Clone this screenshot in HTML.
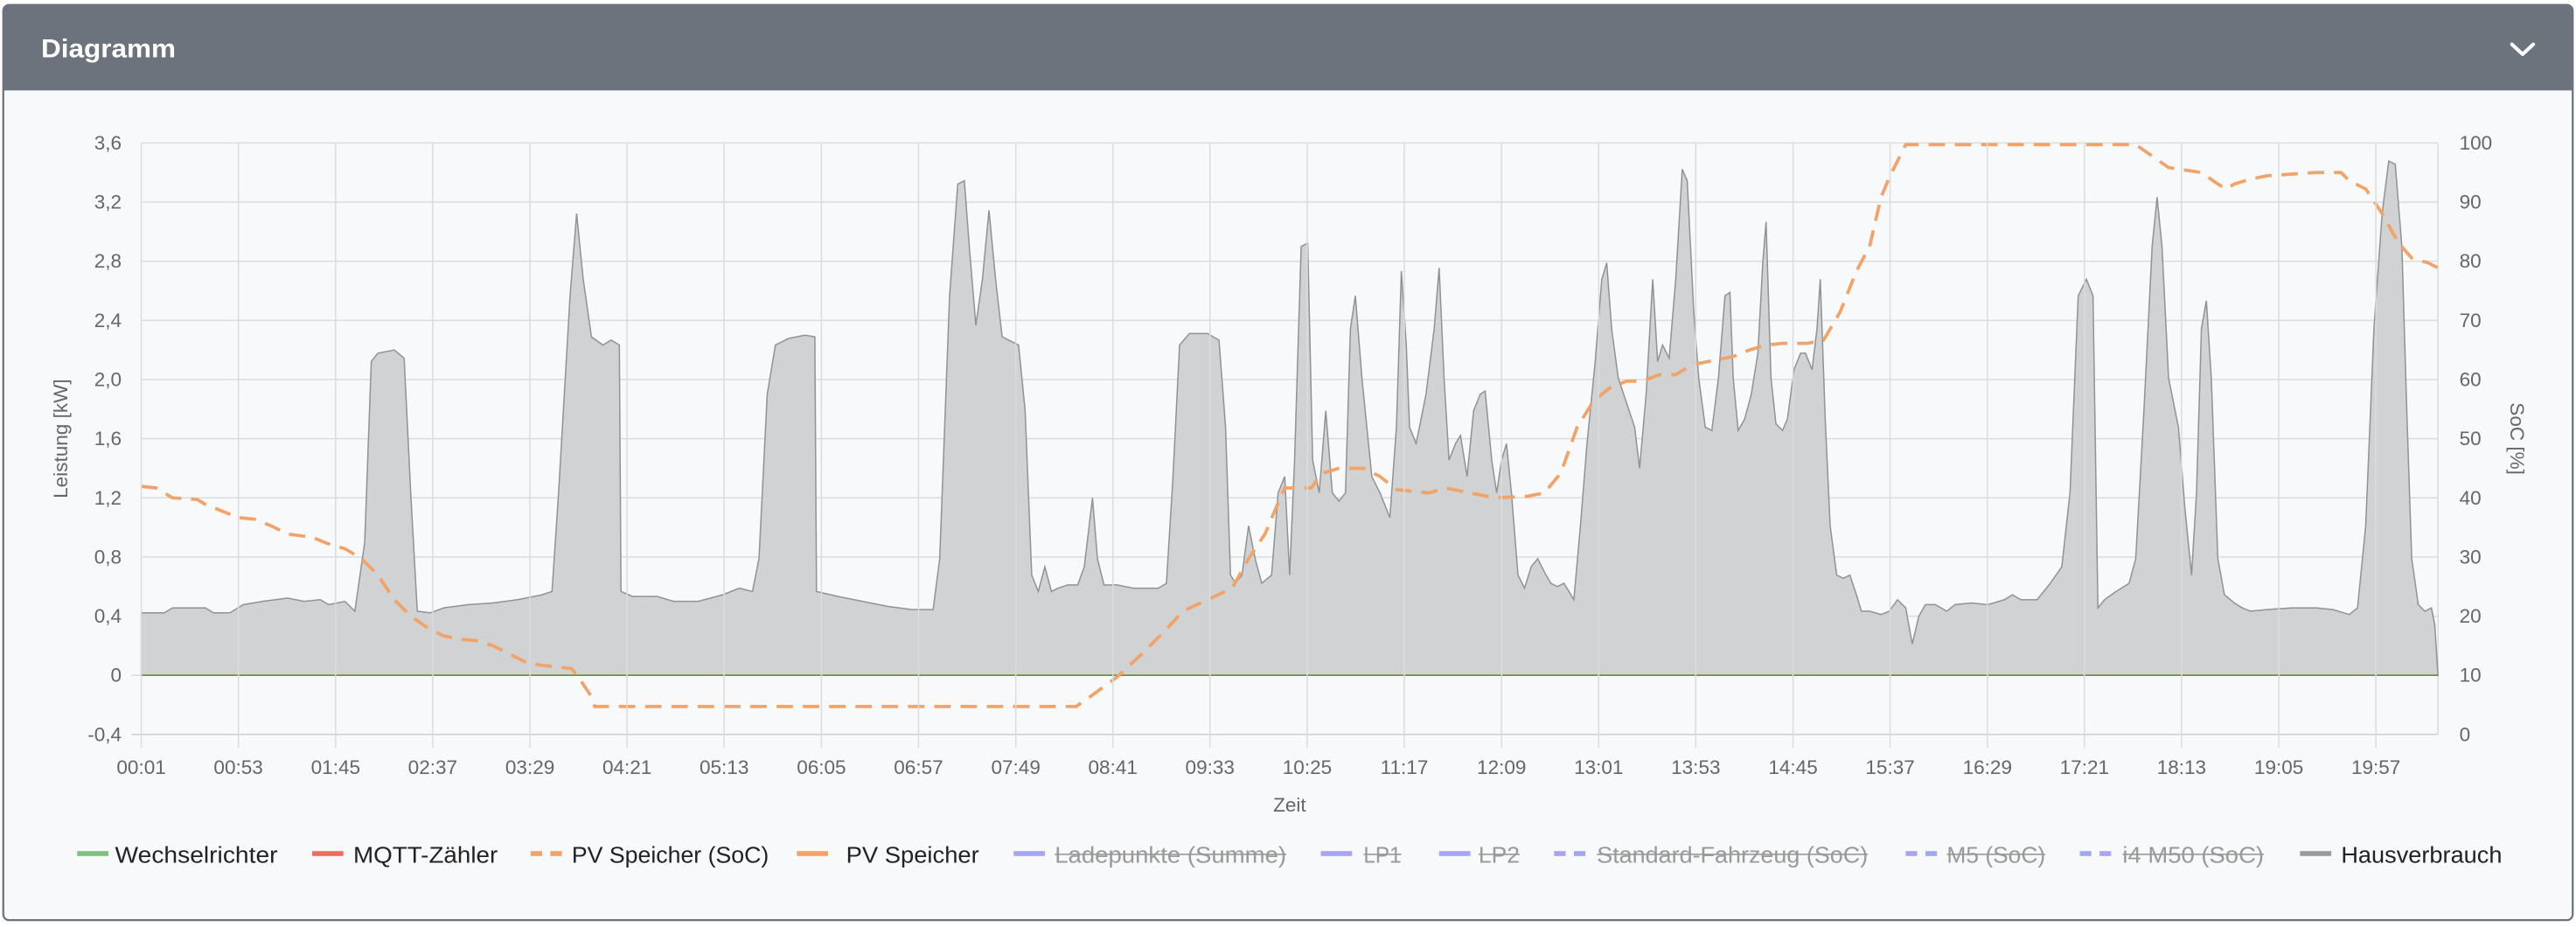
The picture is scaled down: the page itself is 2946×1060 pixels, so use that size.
<!DOCTYPE html>
<html><head><meta charset="utf-8"><style>
html,body{margin:0;padding:0;background:#fff;width:2946px;height:1060px;overflow:hidden}
svg{display:block}
text{font-family:"Liberation Sans",sans-serif}
</style></head><body>
<svg width="2946" height="1060" viewBox="0 0 1568 564.2" preserveAspectRatio="none" xmlns="http://www.w3.org/2000/svg">
<rect x="0" y="0" width="1568" height="564.2" fill="#ffffff"/>
<rect x="2" y="3" width="1564" height="557" rx="3.5" fill="#f8f9fa" stroke="#6c737c" stroke-width="1.2"/>
<path d="M2,55 V6.5 A3.5,3.5 0 0 1 5.5,3 H1562.5 A3.5,3.5 0 0 1 1566,6.5 V55 Z" fill="#6c737c"/>
<text x="25" y="35" font-size="16" font-weight="bold" fill="#fff" textLength="82" lengthAdjust="spacingAndGlyphs">Diagramm</text>
<path d="M1529,27 L1535.5,33 L1542,27" fill="none" stroke="#fff" stroke-width="2.2" stroke-linecap="round" stroke-linejoin="round"/>

<g stroke="#dcdcdc" stroke-width="0.8">
<line x1="86" y1="87" x2="1484" y2="87"/><line x1="86" y1="123" x2="1484" y2="123"/><line x1="86" y1="159" x2="1484" y2="159"/><line x1="86" y1="195" x2="1484" y2="195"/><line x1="86" y1="231" x2="1484" y2="231"/><line x1="86" y1="267" x2="1484" y2="267"/><line x1="86" y1="303" x2="1484" y2="303"/><line x1="86" y1="339" x2="1484" y2="339"/><line x1="86" y1="375" x2="1484" y2="375"/><line x1="80" y1="411" x2="1484" y2="411"/><line x1="80" y1="447" x2="1484" y2="447" stroke="#cfcfcf"/>
<line x1="1484" y1="87" x2="1484" y2="447"/>
</g>

<path fill="#d1d2d4" stroke="#929292" stroke-width="0.8" d="M86,411 L86,373 L100,373 L105,370 L125,370 L130,373 L140,373 L148,368 L160,366 L175,364 L185,366 L195,365 L200,368 L210,366 L216,372 L222,330 L226,220 L230,215 L240,213 L246,218 L250,300 L254,372 L262,373 L270,370 L285,368 L300,367 L315,365 L330,362 L336,360 L340,300 L347,180 L351,130 L355,170 L360,205 L367,210 L372,207 L377,210 L378,360 L385,363 L400,363 L410,366 L425,366 L440,362 L450,358 L458,360 L462,340 L467,240 L472,210 L480,206 L490,204 L496,205 L497,360 L510,363 L525,366 L540,369 L555,371 L568,371 L572,340 L578,180 L583,112 L587,110 L590,150 L594,198 L598,170 L602,128 L606,170 L610,205 L620,210 L624,250 L628,350 L632,360 L636,345 L640,360 L644,358 L650,356 L656,356 L660,345 L665,303 L668,340 L672,356 L680,356 L690,358 L705,358 L710,355 L714,290 L718,210 L724,203 L735,203 L742,207 L746,260 L749,350 L752,355 L756,350 L760,320 L764,340 L768,355 L774,350 L778,300 L782,290 L785,350 L788,280 L792,150 L796,148 L799,280 L803,300 L807,250 L811,300 L815,305 L819,300 L822,200 L825,180 L829,230 L835,290 L840,300 L846,315 L850,260 L853,165 L856,210 L858,260 L862,270 L868,240 L873,200 L876,163 L879,230 L882,280 L886,270 L889,265 L893,290 L897,250 L901,240 L904,238 L908,280 L911,300 L914,280 L917,270 L920,300 L924,350 L928,358 L932,345 L936,340 L940,348 L944,355 L948,357 L952,355 L958,365 L962,320 L966,270 L971,220 L975,170 L978,160 L981,200 L985,230 L990,245 L995,260 L998,285 L1002,240 L1006,170 L1009,220 L1012,210 L1016,218 L1020,170 L1024,103 L1027,110 L1031,190 L1034,230 L1038,260 L1042,262 L1046,230 L1050,180 L1053,178 L1055,230 L1058,262 L1062,255 L1066,240 L1070,215 L1073,160 L1075,135 L1078,230 L1081,258 L1085,262 L1088,255 L1092,225 L1096,215 L1099,215 L1103,225 L1106,200 L1108,170 L1111,255 L1114,320 L1118,350 L1122,352 L1126,350 L1130,362 L1133,372 L1138,372 L1145,374 L1150,372 L1155,365 L1160,370 L1164,392 L1168,375 L1172,368 L1178,368 L1185,372 L1190,368 L1200,367 L1210,368 L1220,365 L1225,362 L1230,365 L1240,365 L1248,355 L1255,345 L1260,300 L1265,180 L1270,170 L1274,180 L1277,370 L1281,365 L1288,360 L1296,355 L1300,340 L1305,250 L1310,150 L1313,120 L1316,150 L1320,230 L1326,260 L1330,310 L1334,350 L1337,300 L1340,200 L1343,183 L1346,230 L1350,340 L1354,362 L1360,367 L1365,370 L1370,372 L1380,371 L1395,370 L1410,370 L1420,371 L1430,374 L1435,370 L1440,320 L1445,200 L1450,130 L1454,98 L1458,100 L1462,150 L1465,250 L1468,340 L1472,368 L1476,372 L1480,370 L1482,380 L1484,411 Z"/>
<line x1="86" y1="411" x2="1484" y2="411" stroke="#6a8f3a" stroke-width="0.9"/>
<path fill="none" stroke="#f0a36a" stroke-width="2" stroke-dasharray="10,6" d="M86,296 L95,297 L100,300 L105,303 L120,304 L125,307 L135,311 L145,315 L155,316 L165,320 L175,325 L190,327 L200,331 L210,334 L220,340 L230,350 L240,365 L250,375 L260,382 L270,387 L280,389 L290,390 L300,393 L310,398 L320,403 L330,405 L340,406 L348,407 L352,412 L360,424 L362,430 L655,430 L665,423 L680,412 L695,398 L710,383 L720,372 L735,365 L750,358 L760,340 L770,325 L778,306 L782,297 L798,297 L805,288 L815,285 L830,285 L840,290 L850,298 L870,300 L880,297 L895,300 L910,303 L930,302 L940,300 L950,288 L960,260 L970,244 L980,236 L990,232 L1000,232 L1010,228 L1020,228 L1030,222 L1045,219 L1055,217 L1065,213 L1075,210 L1085,209 L1100,209 L1110,207 L1120,190 L1130,165 L1138,150 L1145,120 L1150,108 L1160,88 L1300,88 L1310,95 L1320,102 L1340,105 L1350,112 L1355,115 L1360,112 L1370,109 L1380,107 L1410,105 L1425,105 L1430,110 L1440,115 L1450,130 L1460,148 L1468,157 L1478,160 L1484,163"/>

<g font-size="12" fill="#666" text-anchor="end">
<text x="74" y="91">3,6</text><text x="74" y="127">3,2</text><text x="74" y="163">2,8</text><text x="74" y="199">2,4</text><text x="74" y="235">2,0</text><text x="74" y="271">1,6</text><text x="74" y="307">1,2</text><text x="74" y="343">0,8</text><text x="74" y="379">0,4</text><text x="74" y="415">0</text><text x="74" y="451">-0,4</text>
</g>
<g font-size="12" fill="#666">
<text x="1497" y="91">100</text><text x="1497" y="127">90</text><text x="1497" y="163">80</text><text x="1497" y="199">70</text><text x="1497" y="235">60</text><text x="1497" y="271">50</text><text x="1497" y="307">40</text><text x="1497" y="343">30</text><text x="1497" y="379">20</text><text x="1497" y="415">10</text><text x="1497" y="451">0</text>
</g>
<text transform="translate(41,267) rotate(-90)" font-size="12" fill="#666" text-anchor="middle">Leistung [kW]</text>
<text transform="translate(1528,267) rotate(90)" font-size="12" fill="#666" text-anchor="middle">SoC [%]</text>
<text x="785" y="494" font-size="12" fill="#666" text-anchor="middle">Zeit</text>

<g font-size="14">
<rect x="47" y="518" width="19" height="3" fill="#7fbf7f"/><text x="70" y="525" fill="#222" textLength="99" lengthAdjust="spacingAndGlyphs">Wechselrichter</text>
<rect x="190" y="518" width="19" height="3" fill="#ee6b5f"/><text x="215" y="525" fill="#222" textLength="88" lengthAdjust="spacingAndGlyphs">MQTT-Zähler</text>
<rect x="323" y="518" width="7" height="3" fill="#f0a36a"/><rect x="335" y="518" width="7" height="3" fill="#f0a36a"/><text x="348" y="525" fill="#222" textLength="120" lengthAdjust="spacingAndGlyphs">PV Speicher (SoC)</text>
<rect x="485" y="518" width="19" height="3" fill="#f0a36a"/><text x="515" y="525" fill="#222" textLength="81" lengthAdjust="spacingAndGlyphs">PV Speicher</text>
<g fill="#999">
<rect x="617" y="518" width="19" height="3" fill="#a5a5f0"/><text x="642" y="525" textLength="141" lengthAdjust="spacingAndGlyphs">Ladepunkte (Summe)</text>
<rect x="804" y="518" width="19" height="3" fill="#a5a5f0"/><text x="830" y="525" textLength="23" lengthAdjust="spacingAndGlyphs">LP1</text>
<rect x="876" y="518" width="19" height="3" fill="#a5a5f0"/><text x="900" y="525" textLength="25" lengthAdjust="spacingAndGlyphs">LP2</text>
<rect x="946" y="518" width="7" height="3" fill="#a5a5f0"/><rect x="958" y="518" width="7" height="3" fill="#a5a5f0"/><text x="972" y="525" textLength="165" lengthAdjust="spacingAndGlyphs">Standard-Fahrzeug (SoC)</text>
<rect x="1160" y="518" width="7" height="3" fill="#a5a5f0"/><rect x="1172" y="518" width="7" height="3" fill="#a5a5f0"/><text x="1185" y="525" textLength="60" lengthAdjust="spacingAndGlyphs">M5 (SoC)</text>
<rect x="1266" y="518" width="7" height="3" fill="#a5a5f0"/><rect x="1278" y="518" width="7" height="3" fill="#a5a5f0"/><text x="1292" y="525" textLength="86" lengthAdjust="spacingAndGlyphs">i4 M50 (SoC)</text>
</g>
<g stroke="#999" stroke-width="0.9">
<line x1="642" y1="520" x2="783" y2="520"/><line x1="830" y1="520" x2="853" y2="520"/><line x1="900" y1="520" x2="925" y2="520"/><line x1="972" y1="520" x2="1137" y2="520"/><line x1="1185" y1="520" x2="1245" y2="520"/><line x1="1292" y1="520" x2="1378" y2="520"/>
</g>
<rect x="1400" y="518" width="19" height="3" fill="#9a9a9a"/><text x="1425" y="525" fill="#222" textLength="98" lengthAdjust="spacingAndGlyphs">Hausverbrauch</text>
</g>

<g stroke="#dcdcdc" stroke-width="0.8">
<line x1="86.0" y1="87" x2="86.0" y2="455"/><line x1="145.1" y1="87" x2="145.1" y2="455"/><line x1="204.3" y1="87" x2="204.3" y2="455"/><line x1="263.4" y1="87" x2="263.4" y2="455"/><line x1="322.6" y1="87" x2="322.6" y2="455"/><line x1="381.7" y1="87" x2="381.7" y2="455"/><line x1="440.8" y1="87" x2="440.8" y2="455"/><line x1="500.0" y1="87" x2="500.0" y2="455"/><line x1="559.1" y1="87" x2="559.1" y2="455"/><line x1="618.3" y1="87" x2="618.3" y2="455"/><line x1="677.4" y1="87" x2="677.4" y2="455"/><line x1="736.5" y1="87" x2="736.5" y2="455"/><line x1="795.7" y1="87" x2="795.7" y2="455"/><line x1="854.8" y1="87" x2="854.8" y2="455"/><line x1="914.0" y1="87" x2="914.0" y2="455"/><line x1="973.1" y1="87" x2="973.1" y2="455"/><line x1="1032.2" y1="87" x2="1032.2" y2="455"/><line x1="1091.4" y1="87" x2="1091.4" y2="455"/><line x1="1150.5" y1="87" x2="1150.5" y2="455"/><line x1="1209.7" y1="87" x2="1209.7" y2="455"/><line x1="1268.8" y1="87" x2="1268.8" y2="455"/><line x1="1327.9" y1="87" x2="1327.9" y2="455"/><line x1="1387.1" y1="87" x2="1387.1" y2="455"/><line x1="1446.2" y1="87" x2="1446.2" y2="455"/>
</g>
<g font-size="12" fill="#666" text-anchor="middle">
<text x="86.0" y="471">00:01</text><text x="145.1" y="471">00:53</text><text x="204.3" y="471">01:45</text><text x="263.4" y="471">02:37</text><text x="322.6" y="471">03:29</text><text x="381.7" y="471">04:21</text><text x="440.8" y="471">05:13</text><text x="500.0" y="471">06:05</text><text x="559.1" y="471">06:57</text><text x="618.3" y="471">07:49</text><text x="677.4" y="471">08:41</text><text x="736.5" y="471">09:33</text><text x="795.7" y="471">10:25</text><text x="854.8" y="471">11:17</text><text x="914.0" y="471">12:09</text><text x="973.1" y="471">13:01</text><text x="1032.2" y="471">13:53</text><text x="1091.4" y="471">14:45</text><text x="1150.5" y="471">15:37</text><text x="1209.7" y="471">16:29</text><text x="1268.8" y="471">17:21</text><text x="1327.9" y="471">18:13</text><text x="1387.1" y="471">19:05</text><text x="1446.2" y="471">19:57</text>
</g>
</svg>
</body></html>
